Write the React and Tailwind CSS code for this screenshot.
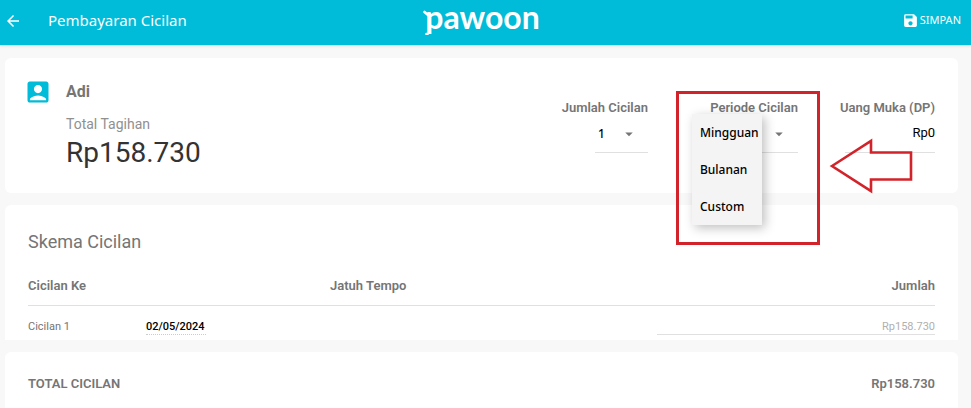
import { useState } from "react";
import { MdAccountBox, MdArrowBack, MdArrowDropDown, MdSave } from "react-icons/md";

const PERIODS = ["Mingguan", "Bulanan", "Custom"];

function Logo() {
  return (
    <div className="relative text-white">
      <span className="block font-['Lato',sans-serif] text-[32px] leading-8 font-bold">pawoon</span>
      {/* paw accents around the stem of the p */}
      <svg viewBox="0 0 12 26" className="absolute -left-0.5 top-2 h-[26px] w-3" fill="none" stroke="currentColor" strokeLinecap="round" aria-hidden="true">
        <path d="M1.500 3L5 6" strokeWidth="2.600" />
        <path d="M3.500 25H4.500" strokeWidth="2.600" />
      </svg>
    </div>
  );
}

function Header() {
  return (
    <header className="grid h-[45px] grid-cols-3 items-center bg-[#00bcd8] pl-1 pr-2.5 font-['Noto_Sans',sans-serif] text-white shadow-sm">
      <div className="flex items-center gap-[26px] pb-1">
        <button type="button" aria-label="Kembali">
          <MdArrowBack size={18} />
        </button>
        <h1 className="whitespace-nowrap text-[15px] font-normal">Pembayaran Cicilan</h1>
      </div>
      <div className="flex justify-center pb-3">
        <Logo />
      </div>
      <button type="button" className="flex items-center gap-px justify-self-end pb-1 text-[11px] font-normal">
        <MdSave size={17} />
        SIMPAN
      </button>
    </header>
  );
}

function PeriodMenu({ onSelect }) {
  return (
    <ul className="absolute right-9 top-4 z-10 w-[70px] bg-[#f4f4f4] font-['Noto_Sans',sans-serif] text-xs font-medium text-black shadow-[3px_3px_10px_rgba(0,0,0,0.25)]">
      {PERIODS.map((period) => (
        <li key={period}>
          <button type="button" onClick={() => onSelect(period)} className="h-[37px] w-full whitespace-nowrap pl-2 pt-px text-left">
            {period}
          </button>
        </li>
      ))}
    </ul>
  );
}

function Highlight() {
  return (
    <>
      <div className="pointer-events-none absolute -right-[22px] -top-[7px] z-20 h-[154px] w-[144px] border-3 border-[#d2232a]" />
      <svg
        viewBox="0 0 84 58"
        className="pointer-events-none absolute -right-[115px] top-[39px] z-20 h-[58px] w-[84px]"
        fill="none"
        stroke="#d2232a"
        strokeWidth="2.6"
        aria-hidden="true"
      >
        <path d="M3 29L42 4V15.500H82V42.500H42V54Z" />
      </svg>
    </>
  );
}

function InstallmentForm() {
  const [count, setCount] = useState("1");
  const [period, setPeriod] = useState("Mingguan");
  const [downPayment, setDownPayment] = useState("Rp0");

  return (
    <section className="flex h-[135px] items-start justify-between rounded-md bg-white px-[23px]">
      <div className="flex gap-4 pt-[22px]">
        <MdAccountBox size={28} className="-ml-1 -mt-0.5 -mr-0.5 text-[#00bcd8]" />
        <div className="pt-0.5">
          <h2 className="text-base leading-5 font-bold text-[#757575]">Adi</h2>
          <p className="mt-3 text-sm leading-5 text-[#909090]">Total Tagihan</p>
          <p className="text-[28px] leading-[38px] text-[#333]">Rp158.730</p>
        </div>
      </div>

      <div className="flex pt-10 text-[13px] text-[#757575]">
        <div className="flex flex-col items-end">
          <label htmlFor="count" className="leading-5 font-semibold">Jumlah Cicilan</label>
          <div className="relative mt-0.5 flex h-[33px] w-[53px] items-center border-b border-[#e0e0e0] pb-1">
            <select
              id="count"
              value={count}
              onChange={(e) => setCount(e.target.value)}
              className="w-full appearance-none pl-[3px] font-['Noto_Sans',sans-serif] text-xs font-medium text-black"
            >
              <option>1</option>
              <option>2</option>
              <option>3</option>
            </select>
            <MdArrowDropDown size={18} className="pointer-events-none absolute right-2.5" />
          </div>
        </div>

        <div className="relative flex w-[150px] flex-col items-end">
          <label htmlFor="period" className="leading-5 font-semibold">Periode Cicilan</label>
          <div className="relative mt-0.5 flex h-[33px] w-[105px] items-center border-b border-[#e0e0e0] pb-1">
            <select
              id="period"
              value={period}
              onChange={(e) => setPeriod(e.target.value)}
              className="w-full appearance-none pl-[7px] font-['Noto_Sans',sans-serif] text-xs font-medium text-black"
            >
              {PERIODS.map((p) => (
                <option key={p}>{p}</option>
              ))}
            </select>
            <MdArrowDropDown size={18} className="pointer-events-none absolute right-2.5" />
          </div>
          <PeriodMenu onSelect={setPeriod} />
          <Highlight />
        </div>

        <div className="flex w-[137px] flex-col items-end">
          <label htmlFor="dp" className="leading-5 font-semibold">Uang Muka (DP)</label>
          <input
            id="dp"
            value={downPayment}
            onChange={(e) => setDownPayment(e.target.value)}
            className="mt-0.5 h-[33px] w-[90px] border-b border-[#e0e0e0] pb-2 text-right text-black"
          />
        </div>
      </div>
    </section>
  );
}

function InstallmentTable() {
  const [dueDate, setDueDate] = useState("02/05/2024");

  return (
    <section className="mt-3 rounded-t-md bg-white px-[23px] pb-[5px] pt-[23px] text-[#757575]">
      <h2 className="text-lg leading-7">Skema Cicilan</h2>
      <table className="mt-3 w-full table-fixed border-collapse text-left text-[13px]">
        <colgroup>
          <col className="w-[118px]" />
          <col className="w-[184px]" />
          <col className="w-[36%]" />
          <col />
        </colgroup>
        <thead>
          <tr className="h-[37px] border-b border-[#e0e0e0] align-top">
            <th colSpan={2} className="pt-2 font-semibold">Cicilan Ke</th>
            <th className="pt-2 font-semibold">Jatuh Tempo</th>
            <th className="pt-2 text-right font-semibold">Jumlah</th>
          </tr>
        </thead>
        <tbody className="text-[11px]">
          <tr className="h-[30px] align-bottom">
            <td className="leading-4">Cicilan 1</td>
            <td colSpan={2}>
              <input
                aria-label="Jatuh tempo cicilan 1"
                value={dueDate}
                onChange={(e) => setDueDate(e.target.value)}
                className="block h-4 w-[60px] border-b border-dotted border-[#ccc] pt-0.5 font-medium text-black"
              />
            </td>
            <td>
              <input
                aria-label="Jumlah cicilan 1"
                value="Rp158.730"
                disabled
                className="block h-4 w-full border-b border-[#e0e0e0] pt-0.5 text-right text-[#b0b0b0]"
              />
            </td>
          </tr>
        </tbody>
      </table>
    </section>
  );
}

export default function App() {
  return (
    <div className="min-h-screen bg-[#f8f8f8] font-['Roboto',sans-serif]">
      <Header />
      <main className="pl-[5px] pr-[13px] pt-[13px]">
        <InstallmentForm />
        <InstallmentTable />
        <section className="mt-3 flex h-14 items-center justify-between rounded-t-md bg-white px-[23px] pt-2 text-[13px] font-semibold text-[#757575]">
          <span>TOTAL CICILAN</span>
          <span>Rp158.730</span>
        </section>
      </main>
    </div>
  );
}
